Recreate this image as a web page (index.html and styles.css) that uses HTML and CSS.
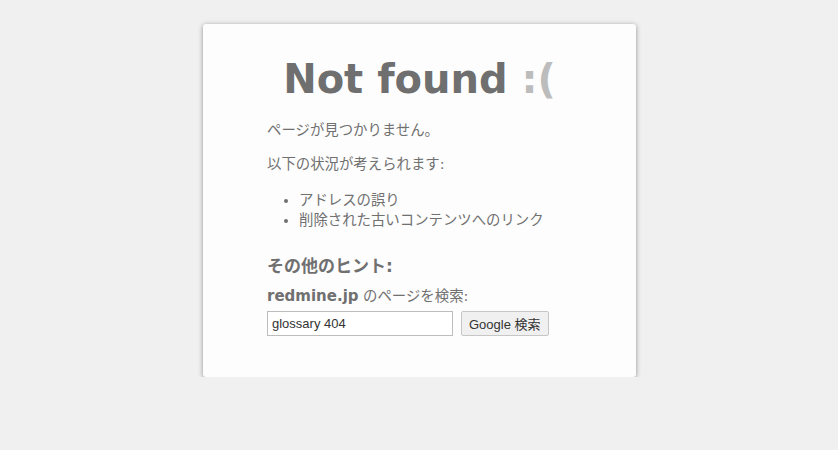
FILE: index.html
```html
<!DOCTYPE html>
<html lang="ja">
<head>
    <meta charset="UTF-8">
    <title>404 Not found</title>
    <link rel="stylesheet" href="styles.css">
</head>
<body>
    <div class="card">
        <h1 class="title">Not found <span class="sad">:(</span></h1>
        <div class="content">
            <p>ページが見つかりません。</p>
            <p>以下の状況が考えられます:</p>
            <ul class="reasons">
                <li>アドレスの誤り</li>
                <li>削除された古いコンテンツへのリンク</li>
            </ul>
            <h3 class="hint">その他のヒント:</h3>
            <p class="search_label"><b>redmine.jp</b> のページを検索:</p>
            <form class="search" onsubmit="return false">
                <input type="text" class="search_input" value="glossary 404">
                <button class="search_btn">Google 検索</button>
            </form>
        </div>
    </div>
</body>
</html>
```

FILE: styles.css
```css
* {
    box-sizing: border-box;
}
body {
    margin: 0;
    background-color: #f0f0f0;
    color: #707070;
    font-family: "DejaVu Sans", "Noto Sans CJK JP", sans-serif;
    font-size: 14.4px;
}
.card {
    width: 433px;
    height: 353px;
    margin: 24px auto 0 auto;
    position: relative;
    left: 0.5px;
    background-color: #fdfdfd;
    border-radius: 3px;
    box-shadow: 0 1px 5px rgba(0, 0, 0, 0.4);
    padding: 30px 0 0 64px;
}
.title {
    margin: 0 0 0 -64px;
    text-align: center;
    font-size: 40px;
    line-height: 50px;
    color: #6f6f6f;
    font-weight: bold;
}
.sad {
    color: #bcbcbc;
}
.content {
    margin-top: 16px;
}
p {
    margin: 0 0 14px 0;
    line-height: 20px;
}
.reasons {
    margin: 16px 0 24px 0;
    padding-left: 32px;
    line-height: 20px;
}
.hint {
    margin: 0 0 8px 0;
    font-size: 17px;
    line-height: 24px;
    font-weight: bold;
}
.search_label {
    margin: 0 0 5px 0;
}
.search_label b {
    font-size: 15px;
}
.search {
    display: flex;
    gap: 8px;
}
.search_input {
    width: 186px;
    height: 25px;
    margin: 0;
    border: 1px solid #bdbdbd;
    padding: 1px 4px;
    font-family: "Liberation Sans", sans-serif;
    font-size: 13px;
    color: #333;
    background: #fff;
}
.search_btn {
    height: 25px;
    padding: 0 7px;
    border: 1px solid #c6c6c6;
    background-color: #f0f0f0;
    color: #333;
    font-family: "Liberation Sans", "Noto Sans CJK JP", sans-serif;
    font-size: 13px;
    border-radius: 2px;
}
```
